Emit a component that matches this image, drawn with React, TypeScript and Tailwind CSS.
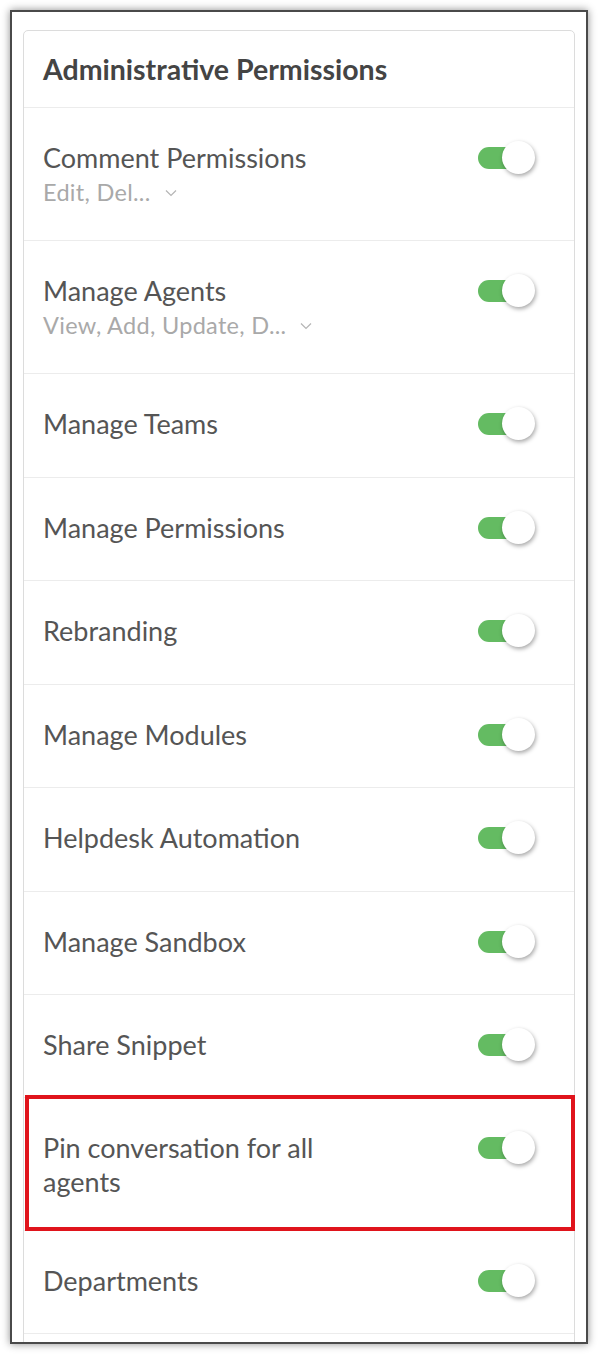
import React from "react";

type Row = { title: string; sub?: string; h: number };

const rows: Row[] = [
  { title: "Comment Permissions", sub: "Edit, Del...", h: 133 },
  { title: "Manage Agents", sub: "View, Add, Update, D...", h: 133 },
  { title: "Manage Teams", h: 104 },
  { title: "Manage Permissions", h: 103 },
  { title: "Rebranding", h: 104 },
  { title: "Manage Modules", h: 103 },
  { title: "Helpdesk Automation", h: 104 },
  { title: "Manage Sandbox", h: 103 },
  { title: "Share Snippet", h: 103 },
  { title: "Pin conversation for all agents", h: 133 },
  { title: "Departments", h: 103 },
];

function Toggle() {
  return (
    <div className="relative w-[57px] h-[34px] shrink-0 mt-[33px]">
      <div className="absolute left-0 top-[6px] w-[44px] h-[22px] rounded-full bg-[#64bb62]" />
      <div className="absolute right-0 top-0 w-[33px] h-[33px] rounded-full bg-white shadow-[1px_2px_4px_rgba(0,0,0,0.35)]" />
    </div>
  );
}

function Chevron() {
  return (
    <svg width="12" height="8" viewBox="0 0 12 8" className="ml-[14px] mt-[2px]">
      <path d="M1 1.5 L6 6.5 L11 1.5" fill="none" stroke="#b5b5b5" strokeWidth="1.2" />
    </svg>
  );
}

export default function App() {
  return (
    <div className="w-[598px] h-[1354px] bg-white pt-[10px] pl-[10px]" style={{ fontFamily: "Lato, 'Open Sans', sans-serif" }}>
      <div className="w-[578px] h-[1334px] border-2 border-[#4a4a4a] bg-white overflow-hidden shadow-[0_0_8px_rgba(0,0,0,0.45)] pt-[18px] px-[11px]">
        <div className="border border-[#dcdcdc] rounded-[5px] bg-white">
          <div className="h-[77px] border-b border-[#ececec] pl-[19px] flex items-center">
            <span className="text-[28.5px] font-bold text-[#444444]">Administrative Permissions</span>
          </div>
          {rows.map((r, i) => (
            <div
              key={i}
              className="relative flex justify-between border-b border-[#ececec] pl-[19px] pr-[39px]"
              style={{ height: r.h }}
            >
              <div className="pt-[33px] max-w-[310px]">
                <div className="text-[27px] leading-[34px] text-[#555555]">{r.title}</div>
                {r.sub && (
                  <div className="flex items-center text-[23.5px] leading-[34px] tracking-[0.3px] text-[#a9a9a9]">
                    {r.sub}
                    <Chevron />
                  </div>
                )}
              </div>
              <Toggle />
              {i === 9 && (
                <div className="absolute left-[1px] top-[-3px] w-[550px] h-[136px] border-4 border-[#e0141c] pointer-events-none" />
              )}
            </div>
          ))}
          <div className="h-[103px]" />
        </div>
      </div>
    </div>
  );
}
